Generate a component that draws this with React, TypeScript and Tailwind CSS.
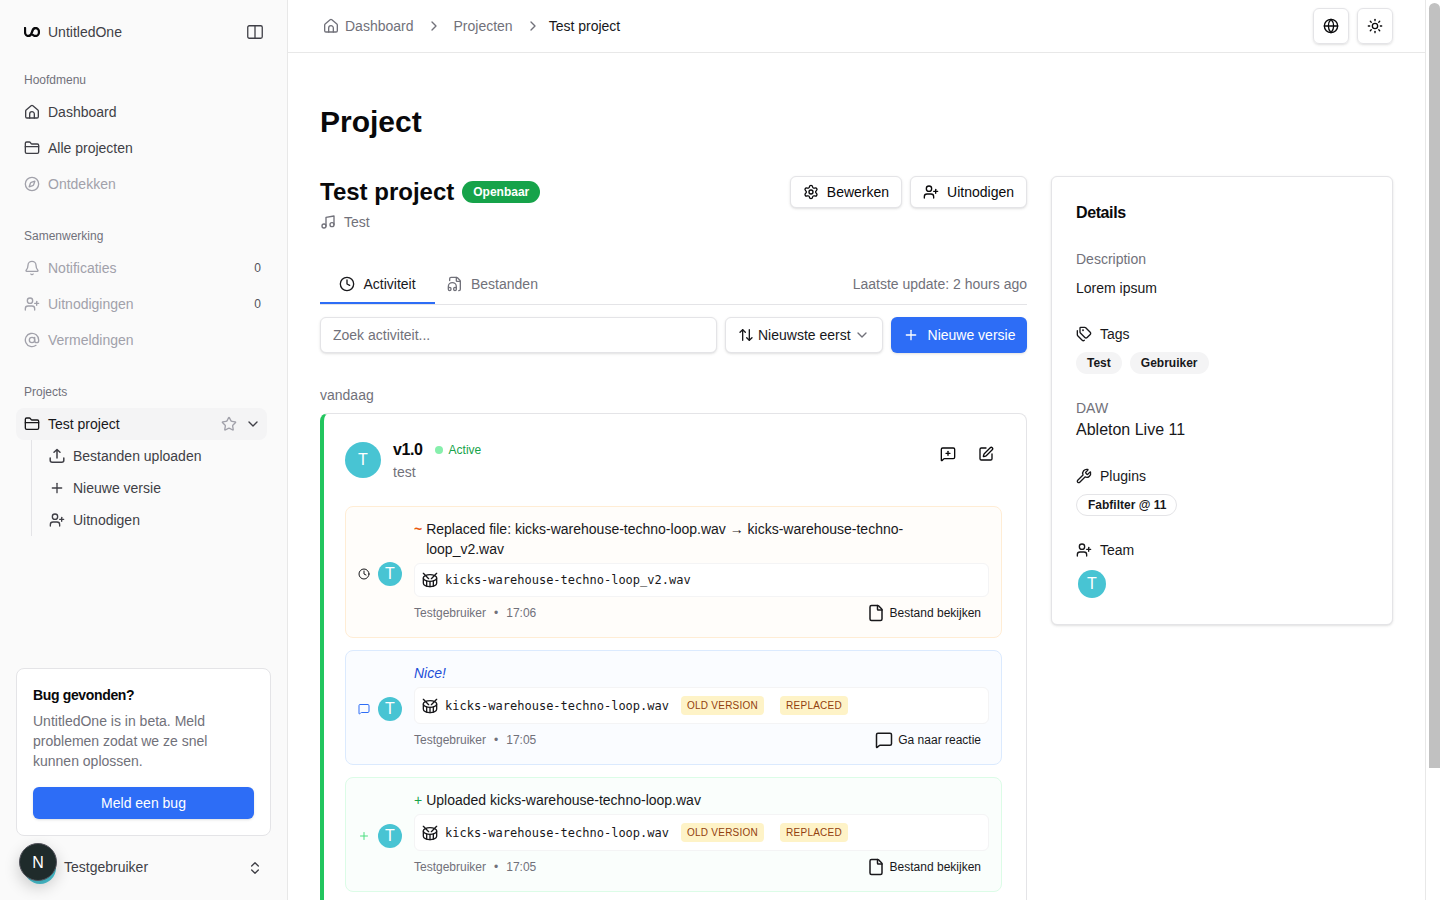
import {
  ArrowUpDown,
  AtSign,
  Bell,
  ChevronDown,
  ChevronRight,
  ChevronsUpDown,
  Clock,
  Compass,
  Drum,
  File,
  FileHeadphone,
  FolderClosed,
  Globe,
  MessageSquare,
  MessageSquarePlus,
  Music,
  Plus,
  Settings,
  SquarePen,
  Star,
  Sun,
  Tags,
  UserPlus,
  Wrench,
} from 'lucide-react';
import type { ReactNode } from 'react';

function Logo() {
  return (
    <svg viewBox="0 0 16 10" className="h-[10px] w-4" fill="none" stroke="currentColor" strokeWidth="2.3" strokeLinecap="round">
      <path d="M1 1V5C1 7.5 2.8 9 4.5 9C6.5 9 7.5 7 8 5C8.5 3 9.5 1 11.5 1C13.5 1 15 3 15 5C15 7 13.5 9 11.5 9C10.3 9 9.5 8.5 9 8" />
    </svg>
  );
}

function HomeIcon() {
  return (
    <svg viewBox="0 0 24 24" className="size-4" fill="none" stroke="currentColor" strokeWidth="2" strokeLinecap="round" strokeLinejoin="round">
      <path d="M2.5 10.6a2 2 0 0 1 .7-1.5l7.5-6.4a2 2 0 0 1 2.6 0l7.5 6.4a2 2 0 0 1 .7 1.5V19a2 2 0 0 1-2 2h-15a2 2 0 0 1-2-2z" />
      <path d="M8.5 21v-6a3.5 3.5 0 0 1 7 0v6" />
    </svg>
  );
}

function PanelIcon() {
  return (
    <svg viewBox="0 0 16 14" className="h-[14px] w-4" fill="none" stroke="currentColor" strokeWidth="1.3">
      <rect x="0.75" y="0.75" width="14.5" height="12.5" rx="1.5" />
      <path d="M8 .75v12.5" />
    </svg>
  );
}

function UploadTray() {
  return (
    <svg viewBox="0 0 16 16" className="size-4" fill="none" stroke="currentColor" strokeWidth="1.5" strokeLinecap="round" strokeLinejoin="round">
      <path d="M8 10V1.5M5 4.2 8 1.5l3 2.7" />
      <path d="M1.2 10v2.3c0 1.2.9 2 2 2h9.6c1.1 0 2-.8 2-2V10" />
    </svg>
  );
}

function SideItem({ icon, label, muted, count }: { icon: ReactNode; label: string; muted?: boolean; count?: number }) {
  return (
    <div className={`flex h-8 items-center gap-2 rounded-md px-2 text-sm ${muted ? 'text-[#a1a1aa]' : 'text-[#3f3f46]'}`}>
      {icon}
      <span className="flex-1">{label}</span>
      {count !== undefined && <span className="-mr-[2px] text-xs text-[#52525b]">{count}</span>}
    </div>
  );
}

function SideLabel({ children, first }: { children: string; first?: boolean }) {
  return <div className={`flex h-8 items-center px-2 text-xs text-[#71717a] ${first ? '' : 'mt-5'}`}>{children}</div>;
}

function Sidebar() {
  return (
    <aside className="flex h-screen w-[288px] shrink-0 flex-col border-r border-[#e8e8e8] bg-[#fafafa]">
      <div className="flex h-16 shrink-0 items-center pl-6 pr-6">
        <span className="text-[#09090b]"><Logo /></span>
        <span className="ml-2 flex-1 text-sm text-[#3f3f46]">UntitledOne</span>
        <span className="text-[#3f3f46]"><PanelIcon /></span>
      </div>
      <nav className="w-[267px] pl-4">
        <SideLabel first>Hoofdmenu</SideLabel>
        <div className="flex flex-col gap-1">
          <SideItem icon={<HomeIcon />} label="Dashboard" />
          <SideItem icon={<FolderClosed className="size-4" />} label="Alle projecten" />
          <SideItem muted icon={<Compass className="size-4" />} label="Ontdekken" />
        </div>
        <SideLabel>Samenwerking</SideLabel>
        <div className="flex flex-col gap-1">
          <SideItem muted icon={<Bell className="size-4" />} label="Notificaties" count={0} />
          <SideItem muted icon={<UserPlus className="size-4" />} label="Uitnodigingen" count={0} />
          <SideItem muted icon={<AtSign className="size-4" />} label="Vermeldingen" />
        </div>
        <SideLabel>Projects</SideLabel>
        <div className="flex h-8 items-center gap-2 rounded-lg bg-[#f4f4f5] pl-2 pr-[6px] text-sm text-[#18181b]">
          <FolderClosed className="size-4" />
          <span className="flex-1">Test project</span>
          <Star className="size-4 text-[#a1a1aa]" />
          <ChevronDown className="size-4 text-[#3f3f46]" />
        </div>
        <div className="ml-[15px] flex flex-col border-l border-[#e4e4e7] pl-[17px] text-sm text-[#3f3f46]">
          <div className="flex h-8 items-center gap-2"><UploadTray />Bestanden uploaden</div>
          <div className="flex h-8 items-center gap-2"><Plus className="size-4" />Nieuwe versie</div>
          <div className="flex h-8 items-center gap-2"><UserPlus className="size-4" />Uitnodigen</div>
        </div>
      </nav>
      <div className="mx-4 mt-auto w-[255px] rounded-lg border border-[#e4e4e7] bg-white p-4">
        <div className="text-sm font-semibold tracking-tight text-[#09090b]">Bug gevonden?</div>
        <p className="mt-[6px] text-sm leading-5 text-[#71717a]">UntitledOne is in beta. Meld problemen zodat we ze snel kunnen oplossen.</p>
        <button type="button" className="mt-4 h-8 w-full rounded-md bg-[#2d6df6] text-sm text-white shadow-sm">Meld een bug</button>
      </div>
      <div className="relative flex h-16 shrink-0 items-center pl-6 pr-6">
        <span className="size-8 rounded-full bg-[#48c4d3]" />
        <span className="-mt-[2px] ml-2 flex-1 text-sm text-[#3f3f46]">Testgebruiker</span>
        <ChevronsUpDown className="size-4 text-[#3f3f46]" />
        <span className="absolute left-[19px] top-[7px] flex size-[38px] items-center justify-center rounded-full border border-[#52525b] bg-[#1f2b2b] pt-px text-base text-white shadow-[0_6px_16px_rgba(0,0,0,0.2)]">N</span>
      </div>
    </aside>
  );
}

function Header() {
  return (
    <header className="flex h-[53px] shrink-0 items-center border-b border-[#e8e8e8] pl-[35px] pr-8 text-sm">
      <span className="text-[#71717a]"><HomeIcon /></span>
      <span className="ml-[6px] text-[#71717a]">Dashboard</span>
      <ChevronRight className="ml-3 size-4 text-[#71717a]" />
      <span className="ml-3 text-[#71717a]">Projecten</span>
      <ChevronRight className="ml-3 size-4 text-[#71717a]" />
      <span className="ml-2 text-[#18181b]">Test project</span>
      <div className="ml-auto flex gap-2">
        <button type="button" className="flex size-9 items-center justify-center rounded-md border border-[#e4e4e7] shadow-sm"><Globe className="size-4" /></button>
        <button type="button" className="flex size-9 items-center justify-center rounded-md border border-[#e4e4e7] shadow-sm"><Sun className="size-4" /></button>
      </div>
    </header>
  );
}

function OutlineButton({ icon, label }: { icon: ReactNode; label: string }) {
  return (
    <button type="button" className="flex h-8 items-center gap-2 rounded-md border border-[#e4e4e7] bg-white px-3 text-sm text-[#09090b] shadow-sm">
      {icon}
      {label}
    </button>
  );
}

function FileRow({ name, flags }: { name: string; flags?: boolean }) {
  return (
    <div className={`mt-1 flex items-center rounded-md border border-[#f4f4f5] bg-white pl-[7px] ${flags ? 'h-[37px]' : 'h-[34px]'}`}>
      <Drum className="size-4 text-[#18181b]" />
      <span className="ml-[7px] font-['DejaVu_Sans_Mono',monospace] text-xs text-[#18181b]">{name}</span>
      {flags && (
        <>
          <span className="ml-3 flex h-[19px] items-center rounded bg-[#fef3c7] px-[6px] text-[10px] tracking-[0.25px] text-[#92400e]">OLD VERSION</span>
          <span className="ml-4 flex h-[19px] items-center rounded bg-[#fef3c7] px-[6px] text-[10px] tracking-[0.25px] text-[#92400e]">REPLACED</span>
        </>
      )}
    </div>
  );
}

function Event({
  tone,
  marker,
  sign,
  body,
  file,
  flags,
  time,
  action,
}: {
  tone: string;
  marker: ReactNode;
  sign?: ReactNode;
  body: ReactNode;
  file: string;
  flags?: boolean;
  time: string;
  action: ReactNode;
}) {
  return (
    <div className={`flex items-center rounded-lg border p-3 ${tone}`}>
      <div className="mt-[3px] flex w-3 shrink-0 justify-center">{marker}</div>
      <span className="ml-[8px] mr-3 mt-[3px] flex size-6 shrink-0 items-center justify-center rounded-full bg-[#48c4d3] text-base text-white">T</span>
      <div className="min-w-0 flex-1">
        <div className="flex gap-1 pr-[60px] text-sm leading-5 text-[#18181b]">
          {sign}
          <div className="min-w-0 flex-1">{body}</div>
        </div>
        <FileRow name={file} flags={flags} />
        <div className="mt-1 flex h-6 items-center gap-2 text-xs text-[#71717a]">
          <span>Testgebruiker</span>
          <span>•</span>
          <span>{time}</span>
          <span className="ml-auto flex items-center gap-[5px] pr-2 text-[#18181b]">{action}</span>
        </div>
      </div>
    </div>
  );
}

function Activity() {
  const viewFile = (
    <>
      <File className="size-[18px]" />
      Bestand bekijken
    </>
  );
  return (
    <div className="mt-2 rounded-lg border border-l-4 border-[#e4e4e7] border-l-[#22c55e] pb-6 pl-[21px] pr-6 pt-6">
      <div className="flex h-11 items-center">
        <span className="flex size-9 items-center justify-center rounded-full bg-[#48c4d3] text-base text-white">T</span>
        <div className="ml-3 flex-1">
          <div className="flex h-6 items-center">
            <span className="text-base font-semibold tracking-tight text-[#09090b]">v1.0</span>
            <span className="ml-3 size-2 rounded-full bg-[#86efac]" />
            <span className="ml-[6px] text-xs text-[#16a34a]">Active</span>
          </div>
          <div className="text-sm leading-5 text-[#71717a]">test</div>
        </div>
        <div className="-mt-3 flex gap-[6px]">
          <span className="flex size-8 items-center justify-center"><MessageSquarePlus className="size-4" /></span>
          <span className="flex size-8 items-center justify-center"><SquarePen className="size-4" /></span>
        </div>
      </div>
      <div className="mt-6 flex flex-col gap-3">
        <Event
          tone="border-[#ffedd5] bg-[#fffdfa]"
          marker={<Clock className="size-3 text-[#18181b]" />}
          sign={<span className="font-semibold text-[#ea580c]">~</span>}
          body="Replaced file: kicks-warehouse-techno-loop.wav → kicks-warehouse-techno-loop_v2.wav"
          file="kicks-warehouse-techno-loop_v2.wav"
          time="17:06"
          action={viewFile}
        />
        <Event
          tone="border-[#dbeafe] bg-[#fafcff]"
          marker={<MessageSquare className="size-3 text-[#2d6df6]" />}
          body={<span className="italic text-[#1d4ed8]">Nice!</span>}
          file="kicks-warehouse-techno-loop.wav"
          flags
          time="17:05"
          action={<><MessageSquare className="size-[18px]" />Ga naar reactie</>}
        />
        <Event
          tone="border-[#dcfce7] bg-[#fafefc]"
          marker={<Plus className="size-3 text-[#4ade80]" />}
          sign={<span className="text-[#16a34a]">+</span>}
          body="Uploaded kicks-warehouse-techno-loop.wav"
          file="kicks-warehouse-techno-loop.wav"
          flags
          time="17:05"
          action={viewFile}
        />
      </div>
    </div>
  );
}

function DetailsCard() {
  return (
    <aside className="h-[449px] w-[342px] shrink-0 rounded-md border border-[#e4e4e7] bg-white px-6 pt-6 text-sm text-[#18181b] shadow-sm">
      <div className="text-base font-semibold leading-6 tracking-tight text-[#09090b]">Details</div>
      <div className="mt-6 text-[#71717a]">Description</div>
      <div className="mt-[9px]">Lorem ipsum</div>
      <div className="mt-[26px] flex items-center gap-2"><Tags className="size-4" />Tags</div>
      <div className="mt-2 flex gap-2 text-xs font-semibold">
        <span className="flex h-[22px] items-center rounded-full bg-[#f4f4f5] px-[11px]">Test</span>
        <span className="flex h-[22px] items-center rounded-full bg-[#f4f4f5] px-[11px]">Gebruiker</span>
      </div>
      <div className="mt-6 text-[#71717a]">DAW</div>
      <div className="mt-px text-base leading-[22px]">Ableton Live 11</div>
      <div className="mt-[25px] flex items-center gap-2"><Wrench className="size-4" />Plugins</div>
      <div className="mt-2 flex text-xs font-semibold">
        <span className="flex h-[22px] items-center rounded-full border border-[#e4e4e7] pl-[11px] pr-[10px]">Fabfilter @ 11</span>
      </div>
      <div className="mt-6 flex items-center gap-2"><UserPlus className="size-4" />Team</div>
      <span className="ml-[2px] mt-[10px] flex size-7 items-center justify-center rounded-full bg-[#48c4d3] text-base text-white">T</span>
    </aside>
  );
}

export default function App() {
  return (
    <div className="flex h-screen overflow-hidden bg-white font-['Liberation_Sans',Arial,sans-serif] text-[#09090b]">
      <Sidebar />
      <main className="flex min-w-0 flex-1 flex-col overflow-y-auto">
        <Header />
        <div className="px-8 pb-[134px] pt-[51px]">
          <h1 className="text-3xl font-bold leading-9">Project</h1>
          <div className="mt-9 flex gap-6">
            <div className="w-[707px] shrink-0">
              <div className="flex items-start">
                <h2 className="text-2xl font-bold leading-8">Test project</h2>
                <span className="ml-2 mt-[5px] flex h-[22px] items-center rounded-full bg-[#16a34a] px-[11px] text-xs font-semibold text-white">Openbaar</span>
                <div className="ml-auto flex gap-2">
                  <OutlineButton icon={<Settings className="size-4" />} label="Bewerken" />
                  <OutlineButton icon={<UserPlus className="size-4" />} label="Uitnodigen" />
                </div>
              </div>
              <div className="mt-1 flex items-center gap-2 text-sm leading-5 text-[#71717a]">
                <Music className="size-4" />
                Test
              </div>
              <div className="mt-8 flex h-[41px] items-start border-b border-[#e4e4e7] text-sm">
                <div className="flex h-10 w-[115px] items-center justify-center gap-2 border-b-2 border-[#2d6df6] pt-[2px] text-[#18181b]">
                  <Clock className="size-4" />
                  Activiteit
                </div>
                <div className="ml-3 flex h-10 items-center gap-2 text-[#71717a]">
                  <FileHeadphone className="size-4" />
                  Bestanden
                </div>
                <div className="ml-auto flex h-10 items-center text-[#71717a]">Laatste update: 2 hours ago</div>
              </div>
              <div className="mt-3 flex gap-2 text-sm">
                <input
                  readOnly
                  placeholder="Zoek activiteit..."
                  className="h-9 flex-1 rounded-md border border-[#e4e4e7] bg-white px-3 text-sm shadow-sm outline-none placeholder:text-[#71717a]"
                />
                <div className="flex h-9 w-[158px] items-center rounded-md border border-[#e4e4e7] bg-white pl-3 text-[#18181b] shadow-sm">
                  <ArrowUpDown className="size-4" />
                  <span className="ml-1">Nieuwste eerst</span>
                  <ChevronDown className="ml-[3px] size-4 text-[#71717a]" />
                </div>
                <button type="button" className="flex h-9 w-[136px] items-center justify-center gap-2 rounded-md bg-[#2d6df6] text-white shadow-sm">
                  <Plus className="size-4" />
                  <span className="ml-px">Nieuwe versie</span>
                </button>
              </div>
              <div className="mt-8 text-sm leading-5 text-[#71717a]">vandaag</div>
              <Activity />
            </div>
            <DetailsCard />
          </div>
        </div>
      </main>
      <div className="w-[15px] shrink-0 border-l border-[#e8e8e8] bg-white pl-[3px] pt-[3px]">
        <div className="h-[765px] w-[11px] rounded-t-full bg-[#c1c1c1]" />
      </div>
    </div>
  );
}
